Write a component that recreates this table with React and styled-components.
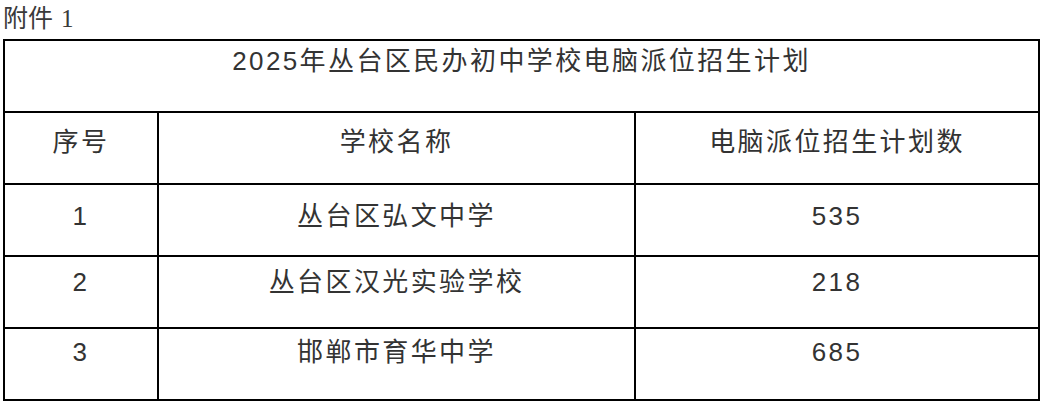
import React from "react";
import styled, { createGlobalStyle } from "styled-components";

const GlobalStyle = createGlobalStyle`
  html, body {
    margin: 0;
    padding: 0;
    background: #ffffff;
  }
  body {
    font-family: "Liberation Sans", "Noto Sans CJK SC", sans-serif;
    color: #333333;
  }
`;

const Page = styled.div`
  width: 1045px;
  min-height: 409px;
  padding: 2px 0 0 3px;
  box-sizing: border-box;
`;

const Attachment = styled.div`
  height: 37px;
  font-family: "Noto Sans CJK SC", sans-serif;
  font-size: 25px;
  line-height: 28px;
  color: #3a3a3a;
`;

const Num = styled.span`
  font-family: "Liberation Serif", serif;
  margin-left: 8px;
`;

const Table = styled.table`
  border-collapse: collapse;
  table-layout: fixed;
  width: 1035px;
`;

const Cell = styled.td`
  border: 2px solid #000000;
  height: 72px;
  padding: ${(p) => p.$top}px 0 0;
  box-sizing: border-box;
  vertical-align: top;
  text-align: center;
  font-size: 26px;
  line-height: 30px;
  letter-spacing: 2.4px;
  color: #333333;
`;

const plans = [
  { id: 1, school: "丛台区弘文中学", count: 535, top: 16 },
  { id: 2, school: "丛台区汉光实验学校", count: 218, top: 10 },
  { id: 3, school: "邯郸市育华中学", count: 685, top: 8 },
];

export default function App() {
  return (
    <>
      <GlobalStyle />
      <Page>
        <Attachment>
          附件<Num>1</Num>
        </Attachment>
        <Table>
          <colgroup>
            <col style={{ width: 154 }} />
            <col style={{ width: 477 }} />
            <col style={{ width: 404 }} />
          </colgroup>
          <tbody>
            <tr>
              <Cell colSpan={3} $top={5}>
                2025年丛台区民办初中学校电脑派位招生计划
              </Cell>
            </tr>
            <tr>
              <Cell $top={14}>序号</Cell>
              <Cell $top={14}>学校名称</Cell>
              <Cell $top={14}>电脑派位招生计划数</Cell>
            </tr>
            {plans.map((row) => (
              <tr key={row.id}>
                <Cell $top={row.top}>{row.id}</Cell>
                <Cell $top={row.top}>{row.school}</Cell>
                <Cell $top={row.top}>{row.count}</Cell>
              </tr>
            ))}
          </tbody>
        </Table>
      </Page>
    </>
  );
}
